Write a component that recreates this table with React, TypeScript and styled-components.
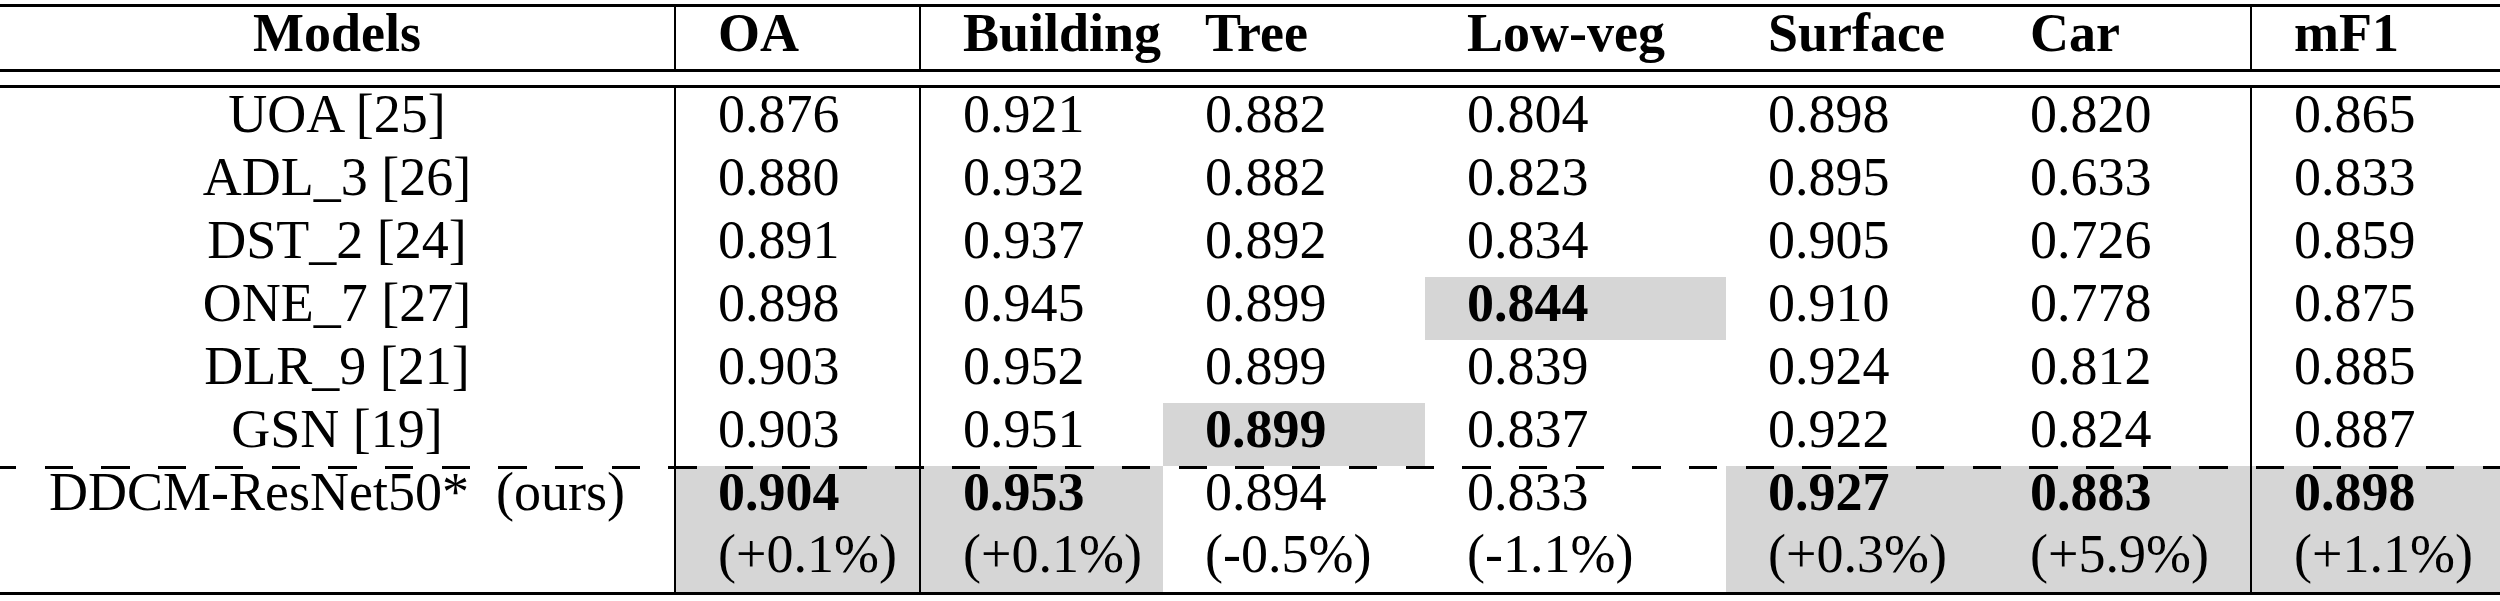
import React from 'react';
import styled, { createGlobalStyle } from 'styled-components';

const GlobalStyle = createGlobalStyle`
  html, body {
    margin: 0;
    padding: 0;
    background: #fff;
  }
  body {
    font-family: "Liberation Serif", "Times New Roman", serif;
    color: #000;
  }
`;

// column widths measured off the reference (last one takes the rest)
const COLS = '674px 245px 244px 262px 301px 262px 262px 1fr';
const DIVIDERS = [false, true, true, false, false, false, false, true];

const headers = ['Models', 'OA', 'Building', 'Tree', 'Low-veg', 'Surface', 'Car', 'mF1'];

const rows: { name: string; values: string[]; best?: number }[] = [
  { name: 'UOA [25]', values: ['0.876', '0.921', '0.882', '0.804', '0.898', '0.820', '0.865'] },
  { name: 'ADL_3 [26]', values: ['0.880', '0.932', '0.882', '0.823', '0.895', '0.633', '0.833'] },
  { name: 'DST_2 [24]', values: ['0.891', '0.937', '0.892', '0.834', '0.905', '0.726', '0.859'] },
  { name: 'ONE_7 [27]', values: ['0.898', '0.945', '0.899', '0.844', '0.910', '0.778', '0.875'], best: 3 },
  { name: 'DLR_9 [21]', values: ['0.903', '0.952', '0.899', '0.839', '0.924', '0.812', '0.885'] },
  { name: 'GSN [19]', values: ['0.903', '0.951', '0.899', '0.837', '0.922', '0.824', '0.887'], best: 2 },
];

const ours = {
  name: 'DDCM-ResNet50*  (ours)',
  values: ['0.904', '0.953', '0.894', '0.833', '0.927', '0.883', '0.898'],
  deltas: ['(+0.1%)', '(+0.1%)', '(-0.5%)', '(-1.1%)', '(+0.3%)', '(+5.9%)', '(+1.1%)'],
  best: [true, true, false, false, true, true, true],
};

const Page = styled.div`
  width: 2500px;
  padding-top: 4px;
`;

const Rule = styled.div`
  height: 3px;
  background: #000;
`;

const Gap = styled.div`
  height: 13px;
`;

const Row = styled.div`
  display: grid;
  grid-template-columns: ${COLS};
`;

const LastRow = styled(Row)`
  position: relative;

  &::before {
    content: '';
    position: absolute;
    left: 0;
    right: 0;
    top: 0;
    height: 3px;
    z-index: 1;
    background: repeating-linear-gradient(
      90deg,
      #000 0 16.35px,
      transparent 16.35px 44.7px,
      #000 44.7px 56.7px
    );
  }
`;

const Cell = styled.div<{ $divider?: boolean; $shade?: boolean; $center?: boolean; $bold?: boolean; $pad?: number }>`
  box-sizing: border-box;
  border-left: ${(p) => (p.$divider ? '2px solid #000' : 'none')};
  background: ${(p) => (p.$shade ? '#d6d6d6' : 'transparent')};
  text-align: ${(p) => (p.$center ? 'center' : 'left')};
  padding-left: ${(p) => (p.$center ? 0 : 42)}px;
  padding-bottom: ${(p) => p.$pad ?? 10}px;
  font-size: 54px;
  line-height: 53px;
  font-weight: ${(p) => (p.$bold ? 700 : 400)};
  white-space: pre;
`;

const Value = styled.div<{ $bold?: boolean }>`
  font-weight: ${(p) => (p.$bold ? 700 : 400)};
`;

const Delta = styled.div`
  margin-top: 9px;
`;

const App: React.FC = () => {
  return (
    <Page>
      <GlobalStyle />
      <Rule />
      <Row>
        {headers.map((h, i) => (
          <Cell key={h} $divider={DIVIDERS[i]} $center={i === 0} $bold $pad={9}>
            {h}
          </Cell>
        ))}
      </Row>
      <Rule />
      <Gap />
      <Rule />

      {rows.map((r) => (
        <Row key={r.name}>
          <Cell $center>{r.name}</Cell>
          {r.values.map((v, i) => (
            <Cell key={i} $divider={DIVIDERS[i + 1]} $shade={r.best === i} $bold={r.best === i}>
              {v}
            </Cell>
          ))}
        </Row>
      ))}

      <LastRow>
        <Cell $center $pad={73}>{ours.name}</Cell>
        {ours.values.map((v, i) => (
          <Cell key={i} $divider={DIVIDERS[i + 1]} $shade={ours.best[i]} $pad={11}>
            <Value $bold={ours.best[i]}>{v}</Value>
            <Delta>{ours.deltas[i]}</Delta>
          </Cell>
        ))}
      </LastRow>
      <Rule />
    </Page>
  );
};

export default App;
